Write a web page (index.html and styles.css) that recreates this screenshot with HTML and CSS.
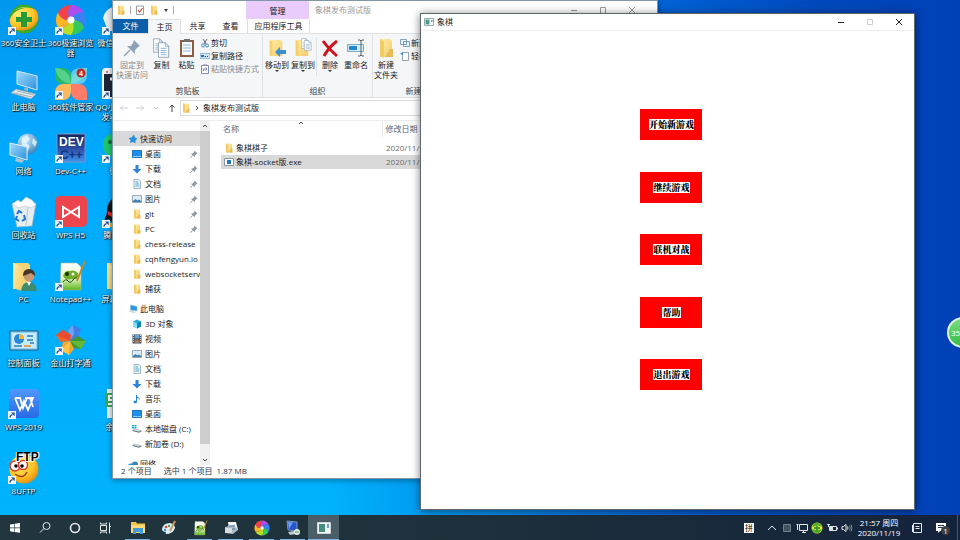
FILE: index.html
```
<!DOCTYPE html>
<html lang="zh-CN">
<head>
<meta charset="utf-8">
<title>象棋</title>
<link rel="stylesheet" href="styles.css">
</head>
<body>
<svg class="defs" aria-hidden="true">
  <defs>
    <linearGradient id="gFolder" x1="0" y1="0" x2="1" y2="1"><stop offset="0" stop-color="#ffedaa"/><stop offset="1" stop-color="#f3cd68"/></linearGradient>
    <linearGradient id="gScreen" x1="0" y1="0" x2="1" y2="1"><stop offset="0" stop-color="#9fdcff"/><stop offset="1" stop-color="#2b8fdc"/></linearGradient>
    <linearGradient id="gDev" x1="0" y1="0" x2="0" y2="1"><stop offset="0" stop-color="#16245c"/><stop offset=".5" stop-color="#2c4ba0"/><stop offset="1" stop-color="#3f93ee"/></linearGradient>
    <linearGradient id="gWps" x1="0" y1="0" x2="0" y2="1"><stop offset="0" stop-color="#4f97fb"/><stop offset="1" stop-color="#2a6ae8"/></linearGradient>
    <radialGradient id="gGold" cx=".35" cy=".3" r=".8"><stop offset="0" stop-color="#fff27a"/><stop offset=".6" stop-color="#ffc425"/><stop offset="1" stop-color="#e08110"/></radialGradient>
    <radialGradient id="gGlobe" cx=".35" cy=".3" r=".8"><stop offset="0" stop-color="#d4f0ff"/><stop offset="1" stop-color="#2a7db8"/></radialGradient>
    <linearGradient id="gNote" x1="0" y1="0" x2="0" y2="1"><stop offset="0" stop-color="#fff"/><stop offset=".55" stop-color="#e9f6c8"/><stop offset="1" stop-color="#59b61c"/></linearGradient>
  </defs>
  <symbol id="shortcut" viewBox="0 0 8 8"><path d="M0 0h8v8H0z" fill="#f4f8fc"/><path d="M2 6.500Q2 4 4.500 3.600" fill="none" stroke="#20508f" stroke-width="1.300"/><path d="M3 1.500h3.700v3.700z" fill="#20508f"/></symbol>
  <symbol id="folder" viewBox="0 0 10 10"><path d="M2 .5h5l1 1v8H2z" fill="url(#gFolder)"/><path d="M2 .5l2 1v8.500l-2-1z" fill="#f2cb64"/><path d="M7 5.500h1.500v4H4.500z" fill="#e9bd55"/></symbol>
  <symbol id="pin" viewBox="0 0 10 10"><path d="M5.500 1.500l3 3-1 .5-1.600 1.700-.2 1.600L1.900 4.700l1.800-.2L5.200 3z" fill="currentColor"/><path d="M3.600 6.500L1.500 8.700" stroke="currentColor"/></symbol>
  <symbol id="app" viewBox="0 0 10 10"><path d="M.5 1.500h9v7h-9z" fill="#fff" stroke="#98aab7"/><path d="M1.500 2.500h4v5h-4z" fill="#4b9c8b"/><path d="M7 3h1.500v2H7z" fill="#6b9fc0"/></symbol>
  <symbol id="desk" viewBox="0 0 10 10"><path d="M.5 1.500h9v7h-9z" fill="#1e90ee" stroke="#2273b9"/><path d="M1 7.500h8" stroke="#7fd0ff"/></symbol>
  <symbol id="down" viewBox="0 0 10 10"><path d="M3.500 1h3v4h3L5 9.500.5 5h3z" fill="#2f82da"/></symbol>
  <symbol id="doc" viewBox="0 0 10 10"><path d="M2 .5h5L8.500 2v7.500H2z" fill="#eef6fa" stroke="#8199a8" stroke-width=".7"/><path d="M3.300 3h3M3.300 5h4M3.300 7h4" stroke="#4ba6ce"/></symbol>
  <symbol id="pic" viewBox="0 0 10 10"><path d="M.5 1.500h9v7h-9z" fill="#dcecf5" stroke="#99a9b4"/><path d="M1 7l2.500-2 2 1.500L7 5.500l2 1.500v1H1z" fill="#3d80ad"/></symbol>
  <symbol id="pc" viewBox="0 0 10 10"><path d="M2.500 1l6.500 1.500v4.500L2.500 6z" fill="#2b98e5" stroke="#8fb9d4" stroke-width=".6"/><path d="M.5 7.500l2-1 5.500 1.500-2 1.200z" fill="#c9d6de"/></symbol>
  <symbol id="drive" viewBox="0 0 10 10"><path d="M.5 6l2-1.200L9.500 6.500v1L7 8.700.5 7z" fill="#65717a"/><path d="M.5 6l2-1.500 7 1.900L7 7.700z" fill="#ccd3d8"/></symbol>
  <symbol id="swirl" viewBox="0 0 32 32">
    <path d="M16 16Q10.200 9.100 16 1A15 15 0 0 1 29 8.500Q19.100 7.500 16 16" fill="#b04df0"/>
    <path d="M16 16Q19.100 7.500 29 8.500A15 15 0 0 1 29 23.500Q24.900 14.400 16 16" fill="#3a80f5"/>
    <path d="M16 16Q24.900 14.400 29 23.500A15 15 0 0 1 16 31Q21.800 22.900 16 16" fill="#35c95c"/>
    <path d="M16 16Q21.800 22.900 16 31A15 15 0 0 1 3 23.500Q12.900 24.500 16 16" fill="#b9de24"/>
    <path d="M16 16Q12.900 24.500 3 23.500A15 15 0 0 1 3 8.500Q7.100 17.600 16 16" fill="#ffb326"/>
    <path d="M16 16Q7.100 17.600 3 8.500A15 15 0 0 1 16 1Q10.200 9.100 16 16" fill="#f4424c"/>
    <circle cx="16" cy="16" r="3.500" fill="#fff"/>
  </symbol>
  <symbol id="notepad" viewBox="0 0 32 32"><path d="M6 3h16l4 4v23H5z" fill="url(#gNote)" stroke="#a9b8a0" stroke-width=".6"/><path d="M8 16q2-6 7-5 6-2 9 4-2 5-8 4-5 2-8-3z" fill="#6fae2b"/><circle cx="12" cy="14" r="2" fill="#17300a"/><circle cx="18" cy="14" r="1.500" fill="#f5fae6"/><path d="M8 22q3-4 5-1t5-1 5-1" stroke="#1f4a16" fill="none"/><path d="M30 1L22 21" stroke="#bb8a2a" stroke-width="2"/></symbol>
  <symbol id="bigfolder" viewBox="0 0 32 32"><path d="M5 3h15l2 2v24H5z" fill="#f5d475"/><path d="M5 3l9 4v24l-9-3z" fill="url(#gFolder)"/></symbol>
  <symbol id="ftab" viewBox="0 0 20 20"><path d="M3 1h12l2 2v16H3z" fill="url(#gFolder)"/><path d="M3 1l3 2v16l-3-1z" fill="#f6d06b"/></symbol>
  <symbol id="page" viewBox="0 0 14 18"><path d="M.5.5h8l4 4v13h-12z" fill="#fff" stroke="#8797a5"/><path d="M8.500.5v4h4M3 7h7M3 9.500h7M3 12h7M3 14.500h7" fill="none" stroke="#78a8d0"/></symbol>
</svg>

<main class="desktop">
  <div class="shortcuts">
    <ul class="shortcut-col">
      <li><svg viewBox="0 0 32 32"><circle cx="16" cy="15" r="14.500" fill="#3da82b"/><path d="M1.500 16Q4 8 13 5q9-3 15 1 3 5 2 10-3 8-12 10-9 2-14-3-2-3-2.500-7z" fill="url(#gGold)"/><path d="M6 7q7-6 16-3Q12 3 6 7z" fill="#a8e05a"/><path d="M13 8h6v5h5v5h-5v5h-6v-5H8v-5h5z" fill="#269a38"/><use href="#shortcut" x="0" y="23" width="8" height="8"/></svg><span>360安全卫士</span></li>
      <li><svg viewBox="0 0 32 32"><path d="M9 3l20 5v14L9 16z" fill="url(#gScreen)" stroke="#d5e7f2"/><path d="M3 25l5-4 20 5-5 5z" fill="#e2e9ed" stroke="#889ba7" stroke-width=".7"/><path d="M6 25l18 4M9 23l17 4" stroke="#8396a2" stroke-width=".7"/><path d="M17 19l3 1v3l-4-1z" fill="#9fb1bd"/></svg><span>此电脑</span></li>
      <li><svg viewBox="0 0 32 32"><circle cx="20" cy="12" r="10.500" fill="url(#gGlobe)"/><path d="M14 6l5-3 3 4-4 4 4 3-3 6-5-6zM25 6l4 4-2 5-3-4z" fill="#e6f5fd" opacity=".8"/><path d="M2 11l17 4v13L2 23z" fill="url(#gScreen)" stroke="#e2edf3"/><path d="M8 26l8 2-2 3-7-2z" fill="#afc2ce"/></svg><span>网络</span></li>
      <li><svg viewBox="0 0 32 32"><path d="M4 8l24-1-4 23-15 1z" fill="#e3edf2" stroke="#a1b4c0" stroke-width=".7"/><path d="M4 8l6-4 3 2 5-5 6 3 4 5-5 3-6-2-6 2z" fill="#fff" stroke="#b3c0c9" stroke-width=".6"/><path d="M20 11l-2 18" stroke="#b9cad5"/><path d="M9 18l2-3 3 2M16 19l1 4-3 2M11 25l-3-2 1-3" fill="none" stroke="#1f73cf" stroke-width="2"/></svg><span>回收站</span></li>
      <li><svg viewBox="0 0 32 32"><use href="#bigfolder" width="32" height="32"/><circle cx="21" cy="16" r="5.500" fill="#c89873"/><path d="M15 16q0-7 6-7t6 7l-4-3-5 2z" fill="#473529"/><path d="M13 31q1-9 8-9t8 9z" fill="#3c8c70"/><path d="M19 22l2 4 2-4z" fill="#fff"/></svg><span>PC</span></li>
      <li><svg viewBox="0 0 32 32"><path d="M2 7h28v19H2z" fill="#8ed2f6" stroke="#295b80"/><path d="M4 9h24v15H4z" fill="#c7ecfe"/><circle cx="11" cy="15" r="5" fill="#2b88d5"/><path d="M11 15v-5a5 5 0 0 1 5 5z" fill="#ffb32c"/><path d="M19 12h6M19 16h6M22 19h4M6 22h8" stroke="#327dae" stroke-width="1.500"/><path d="M16 22h7" stroke="#ef8b2c" stroke-width="1.500"/></svg><span>控制面板</span></li>
      <li><svg viewBox="0 0 32 32"><rect x="1" y="1" width="30" height="29" rx="4" fill="url(#gWps)"/><path d="M7 10h5l3 10 4-10h3l3 9M7 10l5 12 4-9 4 9 5-12h-8" fill="none" stroke="#fff" stroke-width="1.800"/><use href="#shortcut" x="0" y="23" width="8" height="8"/></svg><span>WPS 2019</span></li>
      <li><svg viewBox="0 0 32 32"><circle cx="16" cy="17" r="14.500" fill="url(#gGold)"/><circle cx="7" cy="14" r="5" fill="#fff" stroke="#e23920" stroke-width="1.500"/><circle cx="15" cy="13" r="4.500" fill="#fff" stroke="#e23920" stroke-width="1.500"/><circle cx="8" cy="14" r="1.800"/><circle cx="14" cy="14" r="1.800"/><path d="M7 22q8 6 12-2" fill="none" stroke="#a34412" stroke-width="1.500"/><text x="8" y="9" class="ftp">FTP</text><use href="#shortcut" x="0" y="24" width="8" height="8"/></svg><span>8UFTP</span></li>
    </ul>
    <ul class="shortcut-col">
      <li><svg viewBox="0 0 32 32"><use href="#swirl" width="32" height="32"/><use href="#shortcut" x="0" y="23" width="8" height="8"/></svg><span>360极速浏览器</span></li>
      <li><svg viewBox="0 0 32 32"><path d="M0 0h8q8 1 8 8v8H8Q0 15 0 8z" fill="#25ba65"/><path d="M32 0h-8q-8 1-8 8v8h8q8-1 8-8z" fill="#60c9f5"/><path d="M0 32v-8q1-8 8-8h8v8q-1 8-8 8z" fill="#ffb95c"/><path d="M32 32v-8q-1-8-8-8h-8v8q1 8 8 8z" fill="#ff7d68"/><path d="M0 0q15 1 16 16Q3 14 0 0zM32 0Q17 1 16 16 30 14 32 0z" fill="#8ff0ba" opacity=".45"/><circle cx="26" cy="5" r="4.500" fill="#b92d2d"/><text x="24" y="8" class="badge">4</text><use href="#shortcut" x="0" y="23" width="8" height="8"/></svg><span>360软件管家</span></li>
      <li><svg viewBox="0 0 32 32"><path d="M2 2h28v28H2z" fill="url(#gDev)" stroke="#7b96ca"/><text x="4" y="14" class="dev">DEV</text><text x="5" y="27" class="cpp">C++</text><use href="#shortcut" x="0" y="23" width="8" height="8"/></svg><span>Dev-C++</span></li>
      <li><svg viewBox="0 0 32 32"><rect width="32" height="31" rx="5" fill="#ec454d"/><path d="M8 11v10l16-10v10z" fill="none" stroke="#fff" stroke-width="2"/><use href="#shortcut" x="0" y="24" width="8" height="8"/></svg><span>WPS H5</span></li>
      <li><svg viewBox="0 0 32 32"><use href="#notepad" width="32" height="32"/><use href="#shortcut" x="0" y="23" width="8" height="8"/></svg><span>Notepad++</span></li>
      <li><svg viewBox="0 0 32 32"><path d="M15 17L13 6l5-5 8 4-3 10z" fill="#3f7fe8"/><path d="M13 6l5-5 1 9-4 7z" fill="#6aa5f8"/><path d="M15 17L5 18l-4-7 7-5 8 5z" fill="#f0682a"/><path d="M1 11l7-5 8 5-1 6z" fill="#e84c33"/><path d="M15 17l8-5 8 5-5 8-8-1z" fill="#3f9a34"/><path d="M15 17l16 0-5 8z" fill="#65b73b"/><path d="M15 17l4 8-5 6-8-5 2-8z" fill="#f9a42c"/><path d="M15 17l-1 14-8-5z" fill="#ffc448"/><use href="#shortcut" x="0" y="23" width="8" height="8"/></svg><span>金山打字通</span></li>
    </ul>
    <ul class="shortcut-col">
      <li><svg viewBox="0 0 32 32"><path d="M1 14Q4 2 18 2t14 13-15 12H6z" fill="#e9eef1"/><use href="#shortcut" x="0" y="23" width="8" height="8"/></svg><span>微信开发者</span></li>
      <li><svg viewBox="0 0 32 32"><rect x="1" y="1" width="30" height="29" rx="3" fill="#1c2638" stroke="#f1f3f4" stroke-width="2"/><path d="M2 2h28v4H2z" fill="#e9edf0"/><circle cx="5" cy="4" r="1" fill="#da4d45"/><path d="M8 11h14" stroke="#fff" stroke-width="3"/><use href="#shortcut" x="0" y="23" width="8" height="8"/></svg><span>QQ小程序开发者工具</span></li>
      <li><svg viewBox="0 0 32 32"><circle cx="13" cy="13" r="12" fill="#20c46a"/><circle cx="8" cy="10" r="2" fill="#146b3c"/><use href="#shortcut" x="0" y="23" width="8" height="8"/></svg><span>微信</span></li>
      <li><svg viewBox="0 0 32 32"><ellipse cx="16" cy="15" rx="11" ry="14" fill="#111"/><path d="M5 17l-3 8 5-2z" fill="#111"/><path d="M6 15q8 5 20 0v4q-12 5-20 0z" fill="#e32626"/><path d="M7 27h9v4H6z" fill="#f3ae20"/><use href="#shortcut" x="0" y="24" width="8" height="8"/></svg><span>腾讯QQ</span></li>
      <li><svg viewBox="0 0 32 32"><use href="#bigfolder" width="32" height="32"/></svg><span>屏幕录制</span></li>
      <li></li>
      <li><svg viewBox="0 0 32 32"><path d="M5 1h21v29H5z" fill="#eef2ee"/><path d="M3 5h13v14H3z" fill="#39a852"/><path d="M12 8H7v4h4v4H6" fill="none" stroke="#fff" stroke-width="2"/></svg><span>余额表</span></li>
    </ul>
  </div>

  <section class="window explorer" aria-label="象棋发布测试版">
    <header class="ex-title">
      <div class="quick">
        <svg viewBox="0 0 10 10"><use href="#folder"/></svg><i class="bar"></i>
        <svg viewBox="0 0 10 10"><path d="M1.500 1h7v8.500h-7z" fill="#fff" stroke="#7d8690" stroke-width=".8"/><path d="M3 5l1.500 2L7.500 3" fill="none" stroke="#cf5238" stroke-width="1.200"/></svg>
        <svg viewBox="0 0 10 10"><use href="#folder"/></svg>
        <svg class="drop" viewBox="0 0 6 10"><path d="M1 4h4L3 7z" fill="#444"/></svg><i class="bar"></i>
      </div>
      <div class="manage">管理</div>
      <h1>象棋发布测试版</h1>
      <div class="win-buttons dim">
        <button aria-label="最小化"><svg viewBox="0 0 8 8"><path d="M1 4.500h6"/></svg></button>
        <button aria-label="最大化"><svg viewBox="0 0 8 8"><path d="M1.500 1.500h5v6h-5z"/></svg></button>
        <button aria-label="关闭"><svg viewBox="0 0 8 8"><path d="M1 1l6 6M7 1L1 7"/></svg></button>
      </div>
    </header>
    <nav class="tabs">
      <button class="file">文件</button><button class="current">主页</button><button>共享</button><button>查看</button><button class="tools">应用程序工具</button>
    </nav>
    <div class="ribbon">
      <section class="group clip">
        <div class="tools-row">
          <button class="big pinto"><svg viewBox="0 0 20 20"><path d="M12 2l6 6-2 1-3 3v4l-8-8h4l2-3z" fill="#8fa1b8"/><path d="M8 12l-6 6" stroke="#8fa1b8" stroke-width="1.500"/></svg>固定到<br>快速访问</button>
          <button class="big"><svg viewBox="0 0 20 20"><use href="#page" x="1" y="0" width="11" height="15"/><use href="#page" x="6" y="4" width="12" height="16"/></svg>复制</button>
          <button class="big"><svg viewBox="0 0 20 20"><path d="M3 2h14v17H3z" fill="#8b5d42"/><path d="M5 4h10v13H5z" fill="#fff"/><path d="M7 1h6v3H7z" fill="#6a737c"/><path d="M6 7h8M6 10h8M6 13h8" stroke="#86b8dc"/></svg>粘贴</button>
          <div class="small-list">
            <button><svg viewBox="0 0 10 10"><path d="M3 1l3 5M7 1L4 6" stroke="#667"/><circle cx="3" cy="7.500" r="1.500" fill="none" stroke="#368ac9"/><circle cx="7" cy="7.500" r="1.500" fill="none" stroke="#368ac9"/></svg>剪切</button>
            <button><svg viewBox="0 0 10 10"><path d="M0 2.500h10v5H0z" fill="#cbe5f8" stroke="#75a9cf" stroke-width=".7"/><path d="M1 4l1 2 1-2 1 2M5 5.500h1M7 5.500h1" fill="none" stroke="#1f5280"/></svg>复制路径</button>
            <button class="off"><svg viewBox="0 0 10 10"><path d="M1.500 1.500h7v8h-7z" fill="#fff" stroke="#8391ac"/><path d="M3 .5h4V2H3z" fill="#8391ac"/><path d="M3.500 7V5h3M5.500 3.500L7 5 5.500 6.500" fill="none" stroke="#7589b9"/></svg>粘贴快捷方式</button>
          </div>
        </div>
        <h2>剪贴板</h2>
      </section>
      <section class="group org">
        <div class="tools-row">
          <button class="big"><svg viewBox="0 0 20 20"><use href="#ftab" width="18" height="20"/><path d="M8 14l5-5v3h6v4h-6v3z" fill="#3991d4"/></svg>移动到<i class="caret"></i></button>
          <button class="big"><svg viewBox="0 0 20 20"><use href="#ftab" width="18" height="20"/><use href="#page" x="8" y="0" width="8" height="11"/><use href="#page" x="11" y="2" width="8" height="11"/></svg>复制到<i class="caret"></i></button>
          <i class="split"></i>
          <button class="big"><svg viewBox="0 0 20 20"><path d="M3 3q5 7 14 15M17 3Q9 9 4 18" fill="none" stroke="#cd1520" stroke-width="3"/></svg>删除<i class="caret"></i></button>
          <button class="big"><svg viewBox="0 0 20 20"><path d="M1.500 6.500h16v7h-16z" fill="#d7edfb" stroke="#7cabc8"/><path d="M3 8h8v4H3z" fill="#2587d2"/><path d="M12 2h2l1 1 1-1h2M15 3v14M12 18h2l1-1 1 1h2" fill="none" stroke="#56616a"/></svg>重命名</button>
        </div>
        <h2>组织</h2>
      </section>
      <section class="group new">
        <div class="tools-row">
          <button class="big"><svg viewBox="0 0 20 20"><use href="#folder" width="20" height="20"/></svg>新建<br>文件夹</button>
          <div class="small-list">
            <button><svg viewBox="0 0 10 10"><path d="M.5 1.500h6v5h-6zM3.500 3.500h6v5h-6z" fill="#e9f5fd" stroke="#638fab" stroke-width=".8"/></svg>新建项目</button>
            <button><svg viewBox="0 0 10 10"><path d="M2.500 1.500h6v8h-6z" fill="#fff" stroke="#7f8f9b" stroke-width=".8"/><path d="M0 3l3-2v3" fill="#338acb"/></svg>轻松访问</button>
          </div>
        </div>
        <h2>新建</h2>
      </section>
    </div>
    <div class="address">
      <div class="nav-arrows">
        <svg viewBox="0 0 10 10"><path d="M9 5H1.500M4 2.500L1.500 5 4 7.500" class="faint"/></svg>
        <svg viewBox="0 0 10 10"><path d="M1 5h7.500M6 2.500L8.500 5 6 7.500" class="faint"/></svg>
        <svg viewBox="0 0 10 10"><path d="M3 4l2 2 2-2" class="faint"/></svg>
        <svg viewBox="0 0 10 10"><path d="M5 9V2M2.500 4.500L5 2l2.500 2.500" class="dark"/></svg>
      </div>
      <div class="path"><svg viewBox="0 0 10 10"><use href="#folder"/></svg><svg viewBox="0 0 10 10"><path d="M4 3l2 2-2 2" class="dark"/></svg><span>象棋发布测试版</span></div>
    </div>
    <div class="ex-body">
      <nav class="tree">
        <a href="#" class="root on"><svg viewBox="0 0 10 10"><path d="M6 .5l1 3 2.500 1-2 2v3L5 8 2 9l.5-3L.5 4l3-.5z" fill="#2d8edb"/></svg>快速访问</a>
        <a href="#"><svg><use href="#desk"/></svg>桌面<svg class="pin"><use href="#pin"/></svg></a>
        <a href="#"><svg><use href="#down"/></svg>下载<svg class="pin"><use href="#pin"/></svg></a>
        <a href="#"><svg><use href="#doc"/></svg>文档<svg class="pin"><use href="#pin"/></svg></a>
        <a href="#"><svg><use href="#pic"/></svg>图片<svg class="pin"><use href="#pin"/></svg></a>
        <a href="#"><svg><use href="#folder"/></svg>git<svg class="pin"><use href="#pin"/></svg></a>
        <a href="#"><svg><use href="#folder"/></svg>PC<svg class="pin"><use href="#pin"/></svg></a>
        <a href="#"><svg><use href="#folder"/></svg>chess-release</a>
        <a href="#"><svg><use href="#folder"/></svg>cqhfengyun.io</a>
        <a href="#"><svg><use href="#folder"/></svg>websocketserv</a>
        <a href="#"><svg><use href="#folder"/></svg>捕获</a>
        <a href="#" class="root next"><svg><use href="#pc"/></svg>此电脑</a>
        <a href="#"><svg viewBox="0 0 10 10"><path d="M1 2.500L5 .5l4 2v5l-4 2-4-2z" fill="#22b0d6"/><path d="M1 2.500l4 2v5l-4-2z" fill="#87e0f3"/><path d="M5 4.500l4-2v5l-4 2z" fill="#0f83b4"/></svg>3D 对象</a>
        <a href="#"><svg viewBox="0 0 10 10"><path d="M.5.5h9v9h-9z" fill="#3d4958"/><path d="M2.500 1h5v3.500h-5z" fill="#6aa3cd"/><path d="M2.500 5.500h5V9h-5z" fill="#a37a5c"/><path d="M1.500 1v8M8.500 1v8" stroke="#cfd6dc" stroke-dasharray="1 1"/></svg>视频</a>
        <a href="#"><svg><use href="#pic"/></svg>图片</a>
        <a href="#"><svg><use href="#doc"/></svg>文档</a>
        <a href="#"><svg><use href="#down"/></svg>下载</a>
        <a href="#"><svg viewBox="0 0 10 10"><path d="M4.500 1v6.500" stroke="#1d83d2"/><ellipse cx="3.300" cy="8" rx="1.800" ry="1.300" fill="#1d83d2"/><path d="M4.500.5q0 2 2 3t.5 3q1-2-2.500-3z" fill="#1d83d2"/></svg>音乐</a>
        <a href="#"><svg><use href="#desk"/></svg>桌面</a>
        <a href="#"><svg viewBox="0 0 10 10"><use href="#drive"/><path d="M0 1h2v1.500H0zM2.500 1h2v1.500h-2zM0 3h2v1.500H0zM2.500 3h2v1.500h-2z" fill="#16a5e3"/></svg>本地磁盘 (C:)</a>
        <a href="#"><svg><use href="#drive"/></svg>新加卷 (D:)</a>
        <a href="#" class="root next"><svg viewBox="0 0 10 10"><path d="M.5 5l5-1v4l-5 1z" fill="#3095d7"/><circle cx="7" cy="5.500" r="3" fill="#3b83b7"/></svg>网络</a>
      </nav>
      <div class="scroll"><svg viewBox="0 0 10 10"><path d="M3 6l2-2 2 2" class="dark"/></svg><i></i><svg class="dn" viewBox="0 0 10 10"><path d="M3 4l2 2 2-2" class="dark"/></svg></div>
      <table class="files">
        <thead><tr><th class="name">名称<svg viewBox="0 0 10 10"><path d="M3 4l2-2 2 2" class="dark"/></svg></th><th>修改日期</th></tr></thead>
        <tbody>
          <tr><td><svg><use href="#folder"/></svg>象棋棋子</td><td>2020/11/19</td></tr>
          <tr class="on"><td><svg viewBox="0 0 10 10"><path d="M.5 1.500h9v7h-9z" fill="#fff" stroke="#8499a8"/><path d="M3 3h4v4H3z" fill="#2478bb"/></svg>象棋-socket版.exe</td><td>2020/11/19</td></tr>
        </tbody>
      </table>
    </div>
    <footer class="status"><span>2 个项目</span><span>选中 1 个项目&nbsp; 1.87 MB</span></footer>
  </section>

  <section class="window chess" aria-label="象棋">
    <header class="chess-title">
      <svg viewBox="0 0 10 10"><use href="#app"/></svg><h1>象棋</h1>
      <div class="win-buttons">
        <button aria-label="最小化"><svg viewBox="0 0 8 8"><path d="M1 4.500h6"/></svg></button>
        <button aria-label="最大化" class="disabled" disabled><svg viewBox="0 0 8 8"><path d="M1.500 1.500h5v5h-5z"/></svg></button>
        <button aria-label="关闭"><svg viewBox="0 0 8 8"><path d="M1 1l6 6M7 1L1 7"/></svg></button>
      </div>
    </header>
    <div class="board">
      <div class="menu">
        <button><span>开始新游戏</span></button>
        <button><span>继续游戏</span></button>
        <button><span>联机对战</span></button>
        <button><span>帮助</span></button>
        <button><span>退出游戏</span></button>
      </div>
    </div>
  </section>
  <div class="ball">35</div>
</main>

<footer class="taskbar">
  <div class="system">
    <button aria-label="开始"><svg viewBox="0 0 16 16"><path d="M3 4.500l4-.6v3.700H3zM7.600 3.800l5.400-.8v4.600H7.600zM3 8.200h4v3.700l-4-.6zM7.600 8.200H13v4.600l-5.400-.8z" fill="#fff"/></svg></button>
    <button aria-label="搜索"><svg viewBox="0 0 16 16" class="line"><circle cx="9.500" cy="6" r="3.500"/><path d="M7 8.500L3 12.500"/></svg></button>
    <button aria-label="Cortana"><svg viewBox="0 0 16 16" class="line"><circle cx="8" cy="8" r="4.500" stroke-width="1.600"/></svg></button>
    <button aria-label="任务视图"><svg viewBox="0 0 16 16" class="line"><path d="M3.500 5.500h6v5h-6zM3.500 2.500v1.500h6V2.500M3.500 13.500V12h6v1.500M12.500 2.500v11M12 6.500h2"/></svg></button>
  </div>
  <div class="apps">
    <button class="run" aria-label="文件资源管理器"><svg viewBox="0 0 16 16"><path d="M1 2h5l1 1.500h8V13H1z" fill="#f2c34f"/><path d="M1 5h14v8H1z" fill="#ffdc78"/><path d="M3 8h10v6h-3v-2H6v2H3z" fill="#429cdb"/></svg></button>
    <button aria-label="画图"><svg viewBox="0 0 16 16"><path d="M1 9q1-6 8-6 5 1 5 5-2 6-9 6-1 0 0-2-4 0-4-3z" fill="#dcecf4"/><circle cx="5" cy="7" r="1.300" fill="#e04840"/><circle cx="8" cy="6" r="1.200" fill="#46a850"/><circle cx="4" cy="10" r="1.200" fill="#428cda"/><path d="M14 1L9 11" stroke="#cc9b65" stroke-width="2"/></svg></button>
    <button class="run" aria-label="Notepad++"><svg viewBox="0 0 32 32"><use href="#notepad"/></svg></button>
    <button class="run" aria-label="打印任务"><svg viewBox="0 0 16 16"><path d="M5 2h8l2 8H6z" fill="#f4f7f9"/><path d="M2 7l9-2 4 5-5 4-8-1z" fill="#aeb9c1"/><path d="M6 9h6M6 6h6" stroke="#4784b1"/><path d="M2 8h7v5H2z" fill="#d5dde2"/></svg></button>
    <button class="run" aria-label="360极速浏览器"><svg viewBox="0 0 32 32"><use href="#swirl"/></svg></button>
    <button class="run" aria-label="远程连接"><svg viewBox="0 0 16 16"><path d="M2 1l10 1v9L3 10z" fill="#2855c7" stroke="#9fb6df" stroke-width=".7"/><path d="M3 2l5 .5L4 9z" fill="#729bf0"/><path d="M3 12l6-1 2 3-6 1z" fill="#bec8d3"/><circle cx="12" cy="12" r="3" fill="#e5ece8"/><path d="M10 12h4" stroke="#409b50"/></svg></button>
    <button class="run active" aria-label="象棋"><svg viewBox="0 0 16 16"><path d="M1.500 2.500h13v11h-13z" fill="#f1f5f6" stroke="#cdd5da"/><path d="M3 4h6v8H3z" fill="#448d81"/><path d="M11 4h2v4h-2z" fill="#6f9cbd"/></svg></button>
  </div>
  <div class="tray">
    <span class="ime">拼</span>
    <svg viewBox="0 0 12 12" class="line"><path d="M2 8l4-4 4 4"/></svg>
    <svg viewBox="0 0 12 12"><path d="M2.500 2.500h7v7h-7z" fill="#42535e" stroke="#70808b"/></svg>
    <svg viewBox="0 0 12 12" class="line"><path d="M3.500 2.500h8v6h-8zM6 10.500h4M7.500 8.500v2M1.500 2v6M.5 2.500h2"/></svg>
    <svg viewBox="0 0 12 12"><circle cx="6" cy="6" r="5.500" fill="#f0df2c"/><path d="M1 5q2-5 6-4t4 4Q7 2 1 5zM11 7q-2 5-6 4T1 7q5 2 10 0z" fill="#47af2f"/><path d="M5 4h2v1h2v2H7v2H5V7H3V5h2z" fill="#379e2d"/></svg>
    <svg viewBox="0 0 12 12"><path d="M3.500 4.500h7v4h-7z" fill="none" stroke="#dce4e8"/><path d="M4 5h3v3H4z" fill="#dce4e8"/><path d="M1 2.500h3M2.500 2v3M11.500 5.500v2" stroke="#dce4e8"/></svg>
    <svg viewBox="0 0 12 12" class="line"><path d="M1 4.500h1.500L5 2.500v7L2.500 7.500H1zM6.500 4.500q1 1.500 0 3"/><path d="M8.500 3.500q1.500 2.500 0 5M10 2.500q2 3.500 0 7" opacity=".5"/></svg>
    <time>21:57 周四<br>2020/11/19</time>
    <svg viewBox="0 0 12 12" class="line note"><path d="M2.500 1.500h8v9h-8zM4.500 4.500h4M4.500 6.500h4M1.500 3v7"/></svg>
    <button class="notice" aria-label="通知"><svg viewBox="0 0 12 12"><path d="M1 1h10v8H5l-2 2V9H1z" fill="#fff"/><path d="M3 3.500h6M3 5.500h6" stroke="#22304a"/></svg><b>1</b></button>
    <i class="peek"></i>
  </div>
</footer>
</body>
</html>
```
FILE: styles.css
```
* { box-sizing: border-box; }
html, body { height: 100%; }
body {
  margin: 0;
  display: grid;
  grid-template-rows: minmax(0, 1fr) 25px;
  overflow: hidden;
  font: 8px/10px "Open Sans", "Noto Sans CJK SC", sans-serif;
  color: #1a1a1a;
}
button { border: 0; padding: 0; margin: 0; background: none; font: inherit; color: inherit; }
h1, h2 { margin: 0; font: inherit; }
a { color: inherit; text-decoration: none; }
ul { list-style: none; margin: 0; padding: 0; }
svg { display: block; flex: none; width: 10px; height: 10px; }
.defs { position: absolute; width: 0; height: 0; }
.dark { fill: none; stroke: #444; }
.faint { fill: none; stroke: #cbd0d4; }

/* desktop */
.desktop {
  position: relative;
  overflow: hidden;
  background:
    linear-gradient(to right, transparent 34%, #0064d6 68%, #0048bc 86%, #0040b6),
    linear-gradient(#0097ee, #00aaff 30%, #00b3fd);
}
.shortcuts { display: flex; padding-top: 4px; }
.shortcut-col { width: 47px; flex: none; }
.shortcut-col li { height: 64px; display: flex; flex-direction: column; align-items: center; text-align: center; color: #fff; }
.shortcut-col svg { width: 32px; height: 32px; margin-bottom: 2px; }
.shortcut-col span { text-shadow: 0 0 2px #000, 1px 1px 1px #000; }
.ftp { font: 900 12px "Liberation Sans", sans-serif; stroke: #fff; stroke-width: 2px; paint-order: stroke; }
.badge { font: 700 7px "Liberation Sans", sans-serif; fill: #fff; }
.dev { font: 700 12px "Liberation Sans", sans-serif; fill: #fff; }
.cpp { font: 700 12px "Liberation Sans", sans-serif; fill: #15347e; }

/* windows */
.window { position: absolute; display: flex; flex-direction: column; background: #fff; overflow: hidden; }
.explorer { inset: 0 302px 36px 112px; border: 1px solid #8197a5; box-shadow: 0 1px 6px #0006; }
.chess { inset: 13px 45px 5px 420px; border: 1px solid #5e6870; box-shadow: 0 1px 8px #0008; }
.win-buttons { display: flex; margin-left: auto; }
.win-buttons button { width: 29px; display: grid; place-items: center; }
.win-buttons svg { width: 8px; height: 8px; fill: none; stroke: #222; }
.win-buttons.dim svg { stroke: #999; }
.win-buttons .disabled svg { stroke: #ccc; }

/* explorer header */
.ex-title { display: flex; height: 18px; flex: none; }
.quick { display: flex; align-items: center; width: 133px; padding-left: 3px; gap: 4px; }
.quick .bar { width: 1px; height: 8px; background: #aaa; }
.quick .drop { width: 6px; }
.manage { width: 63px; background: #e9ccfb; text-align: center; line-height: 20px; }
.ex-title h1 { padding-left: 6px; line-height: 18px; color: #999; }
.ex-title .win-buttons { margin-right: 11px; }
.ex-title .win-buttons button { height: 17px; }
.tabs { display: flex; height: 15px; flex: none; border-bottom: 1px solid #dfe1e3; }
.tabs button { width: 33px; }
.tabs .file { width: 35px; background: #0a5fa8; color: #fff; }
.tabs .current { background: #f5f6f7; border: solid #dfe1e3; border-width: 1px 1px 0; height: 15px; }
.tabs .tools { width: 63px; border: solid #e6d6ee; border-width: 0 1px; }

.ribbon { display: flex; height: 64px; flex: none; background: #f5f6f7; border-bottom: 1px solid #dcdee0; }
.group { display: flex; flex-direction: column; border-right: 1px solid #dfe2e5; }
.clip { width: 150px; }
.org { width: 110px; }
.new { width: 82px; }
.group h2 { margin-top: auto; text-align: center; color: #444; line-height: 12px; }
.tools-row { display: flex; padding-top: 4px; }
.big { width: 26px; display: flex; flex-direction: column; align-items: center; white-space: nowrap; }
.big svg { width: 20px; height: 20px; margin-bottom: 2px; }
.big .caret { border: 2px solid transparent; border-top-color: #333; border-bottom: 0; }
.clip .big { width: 25px; }
.clip .pinto { width: 34px; margin-left: 2px; color: #888; }
.split { width: 1px; height: 38px; background: #dfe2e5; }
.org .tools-row { padding-left: 1px; }
.small-list { display: flex; flex-direction: column; gap: 3px; padding-left: 1px; }
.small-list button { display: flex; gap: 1px; white-space: nowrap; }
.off { color: #888; }

.address { display: flex; height: 23px; flex: none; align-items: center; padding: 0 0 2px 6px; border-bottom: 1px solid #ececec; }
.nav-arrows { display: flex; gap: 6px; width: 61px; }
.path { display: flex; flex: 1; align-items: center; height: 16px; border: 1px solid #dcdcdc; }
.path svg + svg { margin: 0 1px; }

/* explorer body */
.ex-body { display: flex; flex: 1; min-height: 0; }
.tree { width: 87px; flex: none; padding-top: 10px; overflow: hidden; }
.tree a { display: flex; align-items: center; height: 15px; padding-left: 19px; gap: 3px; white-space: nowrap; }
.tree .root { padding-left: 15px; gap: 2px; }
.tree .on { background: #d9d9d9; }
.tree .next { margin-top: 5px; }
.tree .pin { margin-left: auto; margin-right: 1px; color: #8c98a3; width: 10px; height: 10px; }
.scroll { width: 10px; flex: none; display: flex; flex-direction: column; background: #f0f0f0; }
.scroll i { flex: 1; background: #cdcdcd; }
.scroll .dn { margin-top: 11px; }
.files { flex: 1; align-self: flex-start; border-collapse: collapse; margin-left: 11px; table-layout: fixed; }
.files th { font-weight: 400; text-align: left; color: #56677a; height: 16px; padding: 0 0 0 3px; border-left: 1px solid #e5e5e5; }
.files .name { width: 161px; padding-left: 2px; border: 0; }
.name svg { float: right; width: 10px; height: 10px; margin-right: 76px; margin-top: -4px; }
.files td { height: 14px; padding: 0 0 0 4px; color: #6d6d6d; white-space: nowrap; }
.files td:first-child { padding-left: 3px; color: #1a1a1a; }
.files td svg { display: inline-block; vertical-align: middle; margin-right: 2px; }
.files tbody::before { content: ""; display: block; height: 4px; }
.files .on { background: #d9d9d9; }
.status { display: flex; gap: 12px; height: 13px; flex: none; padding-left: 8px; line-height: 12px; color: #303848; }

/* chess window */
.chess-title { display: flex; align-items: center; height: 17px; flex: none; padding-left: 3px; gap: 3px; border-bottom: 1px solid #eee; }
.chess-title .win-buttons { margin-right: 1px; }
.board { display: flex; justify-content: center; padding: 78px 0 0 6px; }
.menu { display: flex; flex-direction: column; justify-content: space-between; height: 281px; }
.menu button { width: 62px; height: 31px; padding-left: 2px; background: #f00; font: 900 9px/11px "Noto Serif CJK SC", "Noto Sans CJK SC", serif; color: #000; }
.menu span { background: #fff; display: inline-block; }
.ball { position: absolute; right: -18px; top: 317px; width: 31px; height: 31px; border-radius: 50%; border: 2px solid #dff3e2; background: linear-gradient(#7cdc84, #35ba42); color: #fff; line-height: 27px; padding-left: 2px; }

/* taskbar */
.taskbar { display: flex; background: linear-gradient(to right, #21363e, #1d303b 50%, #14233c); color: #fff; }
.system, .apps { display: flex; }
.system { width: 122px; }
.taskbar button { display: grid; place-items: center; }
.system button { width: 30px; }
.apps button { width: 31px; }
.taskbar svg { width: 16px; height: 16px; }
.taskbar .line { fill: none; stroke: #e5eaed; }
.apps .run { background: linear-gradient(#74b6eb, #74b6eb) center bottom / 25px 1px no-repeat; }
.apps .active { background: linear-gradient(#74b6eb, #74b6eb) bottom / 100% 1px no-repeat #4b5d66; }
.tray { display: flex; align-items: center; margin-left: auto; gap: 3px; padding-right: 2px; }
.tray > svg, .taskbar .notice svg { width: 12px; height: 12px; }
.ime { background: #fff; color: #111; width: 10px; height: 10px; text-align: center; margin-right: 9px; }
.tray time { text-align: center; width: 46px; }
.tray .note { margin: 0 9px 0 6px; }
.tray .notice { position: relative; }
.notice b { position: absolute; left: 6px; top: 4px; width: 9px; height: 9px; border-radius: 50%; background: #3a4048; font-weight: 400; line-height: 9px; }
.peek { align-self: stretch; width: 1px; margin-left: 7px; background: #4b586b; }
```
